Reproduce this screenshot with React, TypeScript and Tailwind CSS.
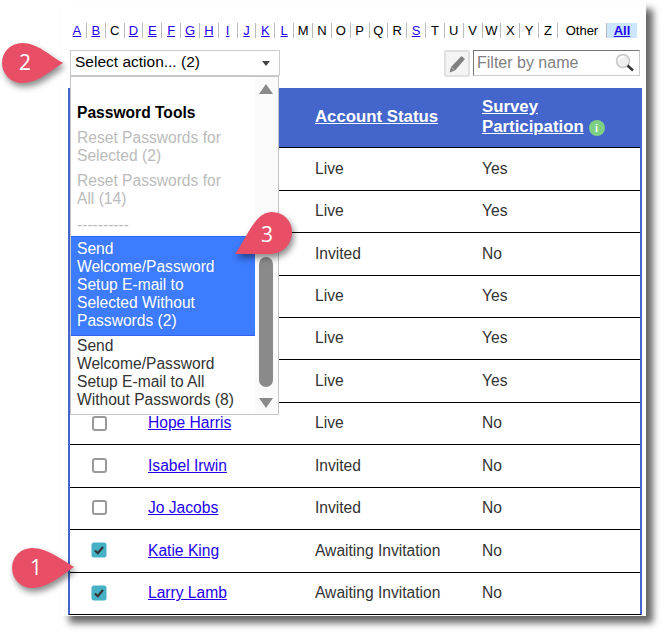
const letters = "ABCDEFGHIJKLMNOPQRSTUVWXYZ".split("");
const linked = new Set(["A","B","D","E","F","G","H","I","J","K","L","S"]);

const rows = [
  ["r1","","Live","Yes",false],
  ["r2","","Live","Yes",false],
  ["r3","","Invited","No",false],
  ["r4","","Live","Yes",false],
  ["r5","","Live","Yes",false],
  ["r6","","Live","Yes",false],
  ["r7","Hope Harris","Live","No",false],
  ["r8","Isabel Irwin","Invited","No",false],
  ["r9","Jo Jacobs","Invited","No",false],
  ["r10","Katie King","Awaiting Invitation","No",true],
  ["r11","Larry Lamb","Awaiting Invitation","No",true],
] as [string,string,string,string,boolean][];

function Check({ on }: { on: boolean }) {
  if (on)
    return (
      <svg width="16" height="16" viewBox="0 0 16 16" className="ml-[21px]">
        <rect x="0.5" y="0.5" width="15" height="15" rx="2.5" fill="#46b1c4" />
        <path d="M4 8.5 L6.8 11.2 L12 5" fill="none" stroke="#333" strokeWidth="2.2" />
      </svg>
    );
  return <div className="ml-[22px] h-[15px] w-[15px] rounded-[3px] border-2 border-[#999] bg-white" />;
}

function Pin({ d, label, x, y, cls }: { d: string; label: string; x: number; y: number; cls: string }) {
  return (
    <svg width="669" height="639" className={cls}>
      <path d={d} fill="#e84f66" className="drop-shadow-[2px_4px_3px_rgba(0,0,0,0.45)]" />
      <text x={x} y={y} fill="#fff" fontSize="21" textAnchor="middle" fontFamily="'Open Sans', sans-serif">{label}</text>
    </svg>
  );
}

export default function App() {
  return (
    <div className="relative h-[639px] w-[669px] overflow-hidden bg-white font-['Liberation_Sans',Arial,sans-serif] text-[15.6px] text-[#333]">
      <div className="ml-[62px] mt-[2px] h-[614px] w-[584px] bg-white pl-[6px] pt-[21px] shadow-[7px_7px_7px_rgba(0,0,0,0.6)]">
        {/* alphabet */}
        <div className="flex h-[15px] items-center text-[13px] leading-[15px] text-black">
          {letters.map((l) => (
            <span key={l} className="flex h-[15px] w-[18.85px] items-center justify-center border-r border-[#bbb]">
              {linked.has(l) ? <a className="text-[#2200ee] underline">{l}</a> : l}
            </span>
          ))}
          <span className="flex h-[15px] w-[49px] items-center justify-center border-r border-[#bbb]">Other</span>
          <span className="flex h-[15px] w-[30px] items-center justify-center bg-[#cce6ff] font-bold">
            <a className="text-[#2200ee] underline">All</a>
          </span>
        </div>
        {/* toolbar */}
        <div className="mt-[12px] flex h-[27px] items-start">
          <div className="ml-[2px] flex h-[26px] w-[210px] items-center justify-between border border-[#ccc] pb-[2px] pl-[4px] pr-[8px] text-[15.5px] text-black">
            <span>Select action... (2)</span>
            <span className="mr-[1px] mt-[2px] h-0 w-0 border-x-[4.5px] border-t-[5px] border-x-transparent border-t-[#444]" />
          </div>
          <div className="ml-[164px] flex h-[27px] w-[26px] items-center justify-center rounded-[2px] border-2 border-[#e0e0e0] bg-[#f4f4f4]">
            <svg width="20" height="20" viewBox="0 0 20 20">
              <path d="M14.5 2 L18 5 L8 16.5 L2.5 18.5 L4 13 Z" fill="#808080" />
              <path d="M4.5 13.5 L7.5 16" stroke="#c4c4c4" strokeWidth="1" />
            </svg>
          </div>
          <div className="ml-[3px] flex h-[26px] w-[167px] items-center justify-between border border-[#ccc] border-l-[#777] border-t-[#777] pl-[3px] pr-[4px] text-[16px] text-[#808080]">
            <span>Filter by name</span>
            <svg width="20" height="20" viewBox="0 0 20 20">
              <circle cx="8" cy="8" r="6.5" fill="#eeeeee" stroke="#c8c8c8" strokeWidth="1.5" />
              <path d="M3.5 7 Q5 3.5 9 3.5" fill="none" stroke="#ffffff" strokeWidth="1.5" />
              <path d="M12.5 12.5 L18 17.5" stroke="#333" strokeWidth="2.5" />
            </svg>
          </div>
        </div>
        {/* table */}
        <div className="mt-[11px] w-[574px]">
          <div className="grid h-[59.2px] grid-cols-[80px_167px_167px_160px] items-center bg-[#4466cc] pb-[2px] text-[16.8px] font-bold leading-[20px] text-white">
            <div />
            <div />
            <a className="underline">Account Status</a>
            <div>
              <a className="underline">Survey</a>
              <br />
              <a className="underline">Participation</a>
              <span className="ml-[5px] inline-flex h-[16px] w-[16px] items-center justify-center rounded-full bg-[#7ed085] text-[11px] leading-none text-white">i</span>
            </div>
          </div>
          <div className="border-x-2 border-b border-[#4466cc] [border-bottom-color:#000]">
            {rows.map(([id, name, status, part, on]) => (
              <div key={id} className="grid h-[42.45px] grid-cols-[78px_167px_167px_158px] items-center border-t border-black pb-[1px]">
                {name ? <Check on={on} /> : <div />}
                {name ? <a className="w-fit text-[#2200ee] underline">{name}</a> : <div />}
                <span>{status}</span>
                <span>{part}</span>
              </div>
            ))}
          </div>
        </div>
      </div>

      {/* open action menu */}
      <div className="absolute left-[70px] top-[76px] flex h-[339px] w-[209px] border border-[#c4c4c4] bg-white text-[15.6px] leading-[18px]">
        <div className="w-[184px] pt-[27px]">
          <div className="pl-[6px] pr-[18px] font-bold text-black">Password Tools</div>
          <div className="mt-[7px] pl-[6px] pr-[18px] text-[#bbb]">Reset Passwords for Selected (2)</div>
          <div className="mt-[7px] pl-[6px] pr-[18px] text-[#bbb]">Reset Passwords for All (14)</div>
          <div className="mt-[8px] h-[20px] overflow-hidden pl-[6px] pr-[18px] text-[#bbb]">----------</div>
          <div className="border-y border-[#2f62f5] bg-[#3d7bff] pb-[5px] pl-[6px] pr-[18px] pt-[3px] text-white">Send Welcome/Password Setup E-mail to Selected Without Passwords (2)</div>
          <div className="pl-[6px] pr-[18px] pt-[1px] text-[#333]">Send Welcome/Password Setup E-mail to All Without Passwords (8)</div>
        </div>
        <div className="relative flex-1 bg-[#fafafa]">
          <span className="absolute left-[4px] top-[7px] h-0 w-0 border-x-[7px] border-b-[10px] border-x-transparent border-b-[#8a8a8a]" />
          <span className="absolute left-[4px] top-[180px] h-[130px] w-[14px] rounded-[7px] bg-[#8a8a8a]" />
          <span className="absolute left-[4px] top-[321px] h-0 w-0 border-x-[7px] border-t-[10px] border-x-transparent border-t-[#8a8a8a]" />
        </div>
      </div>

      <Pin cls="pointer-events-none absolute left-0 top-0" d="M63 63 C50 56 38 43 22 43 A20 20 0 0 0 22 83 C38 83 50 71 63 63 Z" label="2" x={25} y={70} />
      <Pin cls="pointer-events-none absolute left-0 top-0" d="M74 567 C62 560 48 548 32 548 A20 20 0 0 0 32 588 C48 588 62 575 74 567 Z" label="1" x={36} y={575} />
      <Pin cls="pointer-events-none absolute left-0 top-0" d="M235 254 C248 236 255 212 272 212 A20 20 0 0 1 292 232 C292 245 282 254 270 254 Z" label="3" x={267} y={242} />
    </div>
  );
}
